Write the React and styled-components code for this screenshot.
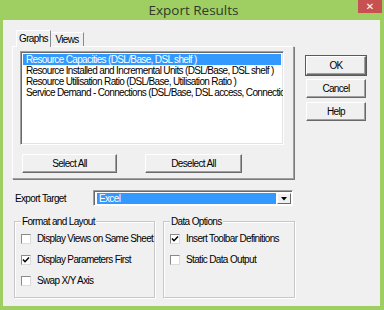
import React from 'react';
import styled, { createGlobalStyle } from 'styled-components';

const Global = createGlobalStyle`
  html, body { margin: 0; padding: 0; }
  body {
    width: 384px; height: 310px; overflow: hidden;
    background: #9fcf62;
    font-family: "Liberation Sans", Arial, sans-serif;
  }
`;

const Frame = styled.div`
  position: relative;
  width: 384px; height: 310px;
  box-sizing: border-box;
  background: #9fcf62;
  padding: 0 4px 4px 3px;
  display: flex; flex-direction: column;
`;

const TitleBar = styled.div`
  height: 20px;
  display: flex; align-items: center; justify-content: center;
  font-family: "Open Sans", "Noto Sans", sans-serif;
  font-size: 13.5px;
  color: #2f3a2a;
  padding-left: 4px;
`;

const Close = styled.div`
  position: absolute; top: 0; right: 2px;
  width: 24px; height: 13px;
  background: #c75050;
  display: flex; align-items: center; justify-content: center;
  color: #fff; font-size: 10px; font-weight: bold;
  font-family: "DejaVu Sans", sans-serif;
`;

const Client = styled.div`
  flex: 1;
  background: #f0f0f0;
  padding: 10px 0 0 9px;
  display: flex; flex-direction: column;
  font-size: 10px;
  letter-spacing: -0.65px;
  color: #000;
`;

const TopRow = styled.div`
  display: flex; align-items: flex-start;
`;

const TabArea = styled.div`
  width: 282px;
  display: flex; flex-direction: column;
`;

const TabStrip = styled.div`
  height: 16px;
  display: flex; align-items: flex-end;
  padding-left: 4px;
`;

const Tab = styled.div`
  position: relative;
  z-index: ${p => (p.$active ? 2 : 1)};
  box-sizing: border-box;
  height: ${p => (p.$active ? 17 : 14)}px;
  margin-bottom: ${p => (p.$active ? -1 : 0)}px;
  width: ${p => p.$w}px;
  background: #f0f0f0;
  border-top: 1px solid #fff;
  border-left: ${p => (p.$active ? '1px solid #fff' : 'none')};
  border-right: 1px solid #8a8a8a;
  display: flex; align-items: center; justify-content: center;
  padding-bottom: ${p => (p.$active ? 1 : 0)}px;
`;

const Panel = styled.div`
  box-sizing: border-box;
  height: 133px;
  border-top: 1px solid #fff;
  border-left: 1px solid #fff;
  border-right: 1px solid #a0a0a0;
  border-bottom: 1px solid #a0a0a0;
  box-shadow: 1px 1px 0 #7a7a7a;
  padding: 4px 0 0 7px;
  display: flex; flex-direction: column;
`;

const ListBox = styled.div`
  box-sizing: border-box;
  width: 264px; height: 94px;
  background: #fff;
  border-top: 1px solid #a0a0a0;
  border-left: 1px solid #a0a0a0;
  border-right: 1px solid #fff;
  border-bottom: 1px solid #fff;
  box-shadow: inset 1px 1px 0 #696969, inset -1px -1px 0 #e3e3e3;
  padding: 2px 2px 0 2px;
  overflow: hidden;
`;

const ListItem = styled.div`
  height: 11px; line-height: 11px;
  padding-left: 3px;
  white-space: nowrap;
  background: ${p => (p.$selected ? '#3399ff' : 'transparent')};
  color: ${p => (p.$selected ? '#fff' : '#000')};
`;

const PanelButtons = styled.div`
  display: flex; gap: 28px;
  margin: 9px 0 0 2px;
`;

const Button = styled.div`
  box-sizing: border-box;
  width: ${p => p.$w}px; height: 19px;
  background: #f0f0f0;
  border-top: 1px solid #fff;
  border-left: 1px solid #fff;
  border-right: 1px solid #696969;
  border-bottom: 1px solid #696969;
  box-shadow: inset -1px -1px 0 #a0a0a0 ${p => (p.$default ? ', 0 0 0 1px #5a5a5a' : '')};
  display: flex; align-items: center; justify-content: center;
`;

const SideButtons = styled.div`
  margin: 26px 0 0 12px;
  display: flex; flex-direction: column; gap: 4px;
`;

const TargetRow = styled.div`
  display: flex; align-items: center;
  margin-top: 11px; height: 16px;
`;

const Label = styled.div`
  width: 78px; padding-left: 3px;
`;

const Combo = styled.div`
  box-sizing: border-box;
  width: 200px; height: 16px;
  background: #fff;
  border-top: 1px solid #a0a0a0;
  border-left: 1px solid #a0a0a0;
  border-right: 1px solid #fff;
  border-bottom: 1px solid #fff;
  box-shadow: inset 1px 1px 0 #696969;
  padding: 2px 1px 1px 3px;
  display: flex;
`;

const ComboValue = styled.div`
  flex: 1;
  background: #3399ff; color: #fff;
  padding-left: 2px;
  display: flex; align-items: center;
`;

const DropButton = styled.div`
  box-sizing: border-box;
  width: 14px;
  margin-left: 1px;
  background: #f0f0f0;
  border-top: 1px solid #fff;
  border-left: 1px solid #fff;
  border-right: 1px solid #696969;
  border-bottom: 1px solid #696969;
  display: flex; align-items: center; justify-content: center;
`;

const Groups = styled.div`
  display: flex; gap: 8px;
  margin: 15px 0 0 2px;
`;

const Group = styled.div`
  position: relative;
  box-sizing: border-box;
  width: ${p => p.$w}px; height: 77px;
  border: 1px solid #c8c8c8;
  box-shadow: inset 1px 1px 0 #fff, 1px 1px 0 #fff;
  padding: 11px 0 0 6px;
  display: flex; flex-direction: column; gap: 10px;
`;

const Legend = styled.div`
  position: absolute; top: -6px; left: 6px;
  background: #f0f0f0;
  padding: 0 1px;
  line-height: 11px;
`;

const CheckRow = styled.div`
  display: flex; align-items: center; gap: 6px;
  height: 11px;
`;

const Box = styled.div`
  box-sizing: border-box;
  width: 10px; height: 10px;
  background: #fff;
  border-top: 1px solid #8a8a8a;
  border-left: 1px solid #8a8a8a;
  border-right: 1px solid #dcdcdc;
  border-bottom: 1px solid #dcdcdc;
  display: flex; align-items: center; justify-content: center;
`;

const Check = ({ label, checked }) => (
  <CheckRow>
    <Box>
      {checked && (
        <svg width="8" height="8" viewBox="0 0 8 8">
          <path d="M1 3.5 L3 5.7 L7 1.5" fill="none" stroke="#000" strokeWidth="1.5" />
        </svg>
      )}
    </Box>
    <span>{label}</span>
  </CheckRow>
);

export default function App() {
  return (
    <>
      <Global />
      <Frame>
        <TitleBar>Export Results</TitleBar>
        <Close>✕</Close>
        <Client>
          <TopRow>
            <TabArea>
              <TabStrip>
                <Tab $active $w={35}>Graphs</Tab>
                <Tab $w={33}>Views</Tab>
              </TabStrip>
              <Panel>
                <ListBox>
                  <ListItem $selected>Resource Capacities (DSL/Base, DSL shelf )</ListItem>
                  <ListItem>Resource Installed and Incremental Units (DSL/Base, DSL shelf )</ListItem>
                  <ListItem>Resource Utilisation Ratio (DSL/Base, Utilisation Ratio )</ListItem>
                  <ListItem>Service Demand - Connections (DSL/Base, DSL access, Connections )</ListItem>
                </ListBox>
                <PanelButtons>
                  <Button $w={95}>Select All</Button>
                  <Button $w={97}>Deselect All</Button>
                </PanelButtons>
              </Panel>
            </TabArea>
            <SideButtons>
              <Button $w={60} $default>OK</Button>
              <Button $w={60}>Cancel</Button>
              <Button $w={60}>Help</Button>
            </SideButtons>
          </TopRow>
          <TargetRow>
            <Label>Export Target</Label>
            <Combo>
              <ComboValue>Excel</ComboValue>
              <DropButton>
                <svg width="6" height="4" viewBox="0 0 6 4">
                  <path d="M0 0 H6 L3 3.5 Z" fill="#000" />
                </svg>
              </DropButton>
            </Combo>
          </TargetRow>
          <Groups>
            <Group $w={141}>
              <Legend>Format and Layout</Legend>
              <Check label="Display Views on Same Sheet" />
              <Check label="Display Parameters First" checked />
              <Check label="Swap X/Y Axis" />
            </Group>
            <Group $w={132}>
              <Legend>Data Options</Legend>
              <Check label="Insert Toolbar Definitions" checked />
              <Check label="Static Data Output" />
            </Group>
          </Groups>
        </Client>
      </Frame>
    </>
  );
}
